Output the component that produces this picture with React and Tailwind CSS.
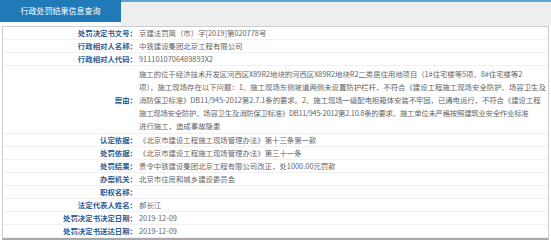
import React from 'react';

const FONT = { fontFamily: '"Noto Sans CJK SC", "Noto Sans", sans-serif' };

// each line carries its own tracking so the wraps land where the reference has them
const CASE_LINES = [
  ['施工的位于经济技术开发区河西区X89R2地块的河西区X89R2地块R2二类居住用地项目（1#住宅楼等5项、8#住宅楼等2', 'tracking-[-0.05px]'],
  ['项），施工现场存在以下问题：1、施工现场东侧坡道两侧未设置防护栏杆，不符合《建设工程施工现场安全防护、场容卫生及', 'tracking-[0px]'],
  ['消防保卫标准》DB11/945-2012第2.7.1条的要求。2、施工现场一级配电柜箱体安装不牢固，已通电运行，不符合《建设工程', 'tracking-[-0.06px]'],
  ['施工现场安全防护、场容卫生及消防保卫标准》DB11/945-2012第2.10.8条的要求。施工单位未严格按照建筑业安全作业标准', 'tracking-[-0.25px]'],
  ['进行施工，造成事故隐患', 'tracking-[0px]'],
];

const ROWS_TOP = [
  ['处罚决定书文号', '京建法罚简（市）字[2019]第020778号'],
  ['行政相对人名称', '中铁建设集团北京工程有限公司'],
  ['行政相对人代码', '9111010706489893X2'],
];

const ROWS_BOTTOM = [
  ['认定依据', '《北京市建设工程施工现场管理办法》第十三条第一款'],
  ['处罚依据', '《北京市建设工程施工现场管理办法》第三十一条'],
  ['处罚结果', '责令中铁建设集团北京工程有限公司改正，处1000.00元罚款'],
  ['办案机关', '北京市住房和城乡建设委员会'],
  ['职权名称', ''],
  ['法定代表人姓名', '郝长江'],
  ['处罚决定书决定日期', '2019-12-09'],
  ['处罚决定书送达日期', '2019-12-09'],
];

function Row({ label, children, tall }) {
  return (
    <div className={`flex border-b border-[#f1f1f1] ${tall ? 'py-[1px]' : 'h-[13px]'}`}>
      <div className="flex w-[134px] shrink-0 items-center justify-end font-bold text-[#2d5b92]">
        {label}：
      </div>
      <div className="min-w-0 flex-1 pl-[2px] text-[#666]">{children}</div>
    </div>
  );
}

export default function App() {
  return (
    <div className="h-[240px] w-[551px] overflow-hidden bg-white text-[7.4px] leading-[12px]" style={FONT}>
      <div className="flex h-[26px] items-start">
        <div className="flex h-[22px] w-[121px] items-center justify-center bg-[#1f7ab7] text-[8px] text-white">
          行政处罚结果信息查询
        </div>
        <div className="h-[26px] flex-1 border-t-2 border-[#5aa6d3] bg-[#eeeeee]" />
      </div>
      <div className="mx-[2px] border-x border-t border-b-2 border-[#cfcfcf] border-b-[#a9a9a9]">
        {ROWS_TOP.map(([k, v]) => (
          <Row key={k} label={k}>
            <div className="whitespace-nowrap">{v}</div>
          </Row>
        ))}
        <Row label="案由" tall>
          {CASE_LINES.map(([line, track]) => (
            <div key={line} className={`whitespace-nowrap leading-[13px] ${track}`}>
              {line}
            </div>
          ))}
        </Row>
        {ROWS_BOTTOM.map(([k, v]) => (
          <Row key={k} label={k}>
            <div className="whitespace-nowrap">{v}</div>
          </Row>
        ))}
      </div>
    </div>
  );
}
